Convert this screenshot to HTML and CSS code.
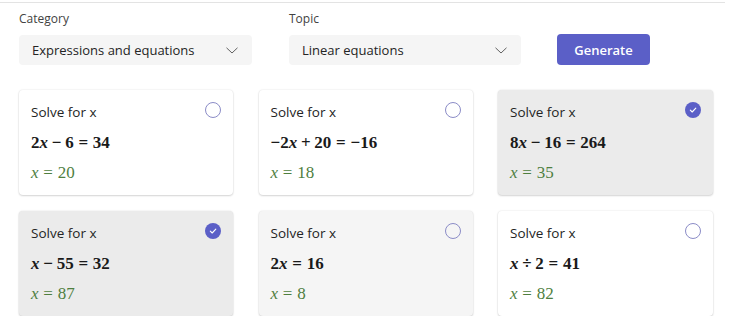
FILE: index.html
```html
<!DOCTYPE html>
<html>
<head>
<meta charset="utf-8">
<link rel="stylesheet" href="styles.css">
</head>
<body>
<div class="panel">
  <div class="controls">
    <div class="field field-cat">
      <div class="label">Category</div>
      <div class="select"><span>Expressions and equations</span>
        <svg class="chev" width="12" height="7" viewBox="0 0 12 7"><path d="M0.5 0.8 L6 6 L11.5 0.8" fill="none" stroke="#616161" stroke-width="1"/></svg>
      </div>
    </div>
    <div class="field field-topic">
      <div class="label">Topic</div>
      <div class="select"><span>Linear equations</span>
        <svg class="chev" width="12" height="7" viewBox="0 0 12 7"><path d="M0.5 0.8 L6 6 L11.5 0.8" fill="none" stroke="#616161" stroke-width="1"/></svg>
      </div>
    </div>
    <button class="generate">Generate</button>
  </div>
  <div class="grid">
    <div class="card">
      <div class="head"><span>Solve for x</span><span class="radio"></span></div>
      <div class="eq">2<i>x</i><span class="op">−</span>6<span class="rel">=</span>34</div>
      <div class="ans"><i>x</i><span class="rel">=</span>20</div>
    </div>
    <div class="card">
      <div class="head"><span>Solve for x</span><span class="radio"></span></div>
      <div class="eq">−2<i>x</i><span class="op">+</span>20<span class="rel">=</span>−16</div>
      <div class="ans"><i>x</i><span class="rel">=</span>18</div>
    </div>
    <div class="card selected">
      <div class="head"><span>Solve for x</span><span class="radio checked"><svg width="16" height="16" viewBox="0 0 16 16"><path d="M5.3 8.2 L7.2 10 L10.8 6.2" fill="none" stroke="#fff" stroke-width="1.1" stroke-linecap="round" stroke-linejoin="round"/></svg></span></div>
      <div class="eq">8<i>x</i><span class="op">−</span>16<span class="rel">=</span>264</div>
      <div class="ans"><i>x</i><span class="rel">=</span>35</div>
    </div>
    <div class="card selected">
      <div class="head"><span>Solve for x</span><span class="radio checked"><svg width="16" height="16" viewBox="0 0 16 16"><path d="M5.3 8.2 L7.2 10 L10.8 6.2" fill="none" stroke="#fff" stroke-width="1.1" stroke-linecap="round" stroke-linejoin="round"/></svg></span></div>
      <div class="eq"><i>x</i><span class="op">−</span>55<span class="rel">=</span>32</div>
      <div class="ans"><i>x</i><span class="rel">=</span>87</div>
    </div>
    <div class="card hover">
      <div class="head"><span>Solve for x</span><span class="radio"></span></div>
      <div class="eq">2<i>x</i><span class="rel">=</span>16</div>
      <div class="ans"><i>x</i><span class="rel">=</span>8</div>
    </div>
    <div class="card">
      <div class="head"><span>Solve for x</span><span class="radio"></span></div>
      <div class="eq"><i>x</i><span class="op">÷</span>2<span class="rel">=</span>41</div>
      <div class="ans"><i>x</i><span class="rel">=</span>82</div>
    </div>
  </div>
</div>
</body>
</html>
```
FILE: styles.css
```css
html, body {
  margin: 0;
  padding: 0;
  background: #ffffff;
}
body {
  font-family: "Open Sans", "Noto Sans", sans-serif;
  color: #242424;
}
.panel {
  margin-top: 2px;
  border-top: 1px solid #e3e3e3;
  padding: 0 0 0 19px;
  width: 706px;
}
.controls {
  display: flex;
  align-items: flex-end;
  padding-top: 7px;
}
.field {
  display: flex;
  flex-direction: column;
}
.field-cat { width: 233px; margin-right: 37px; }
.field-topic { width: 232px; margin-right: 36px; }
.label {
  font-size: 12px;
  line-height: 17px;
  color: #424242;
  margin-bottom: 8px;
}
.select {
  height: 30px;
  background: #f5f5f5;
  border-radius: 4px;
  display: flex;
  align-items: center;
  justify-content: space-between;
  padding: 0 14px 0 13px;
  font-size: 13px;
  color: #242424;
}
.chev { display: block; margin-top: 1px; }
.generate {
  width: 93px;
  height: 31px;
  border: none;
  border-radius: 4px;
  background: #5b5fc7;
  color: #ffffff;
  font-family: "Open Sans", "Noto Sans", sans-serif;
  font-weight: 600;
  font-size: 13px;
  padding: 0;
}
.grid {
  display: grid;
  grid-template-columns: 214px 214px 215px;
  column-gap: 25.5px;
  row-gap: 16px;
  margin-top: 25px;
}
.card {
  height: 105px;
  box-sizing: border-box;
  background: #ffffff;
  border-radius: 4px;
  box-shadow: 0 0 2px rgba(0,0,0,0.12), 0 1px 2px rgba(0,0,0,0.14);
  padding: 12px 12px 0 12px;
}
.card.selected { background: #ebebeb; }
.card.hover { background: #f5f5f5; }
.head {
  display: flex;
  justify-content: space-between;
  align-items: center;
  font-size: 13.5px;
  line-height: 20px;
  color: #242424;
}
.radio {
  width: 16px;
  height: 16px;
  box-sizing: border-box;
  border: 1.5px solid #8b8cc7;
  border-radius: 50%;
  margin-right: 0;
  margin-top: -4px;
  display: flex;
  align-items: center;
  justify-content: center;
}
.radio.checked {
  border: none;
  background: #5b5fc7;
}
.radio svg { display: block; }
.eq {
  margin-top: 11px;
  font-family: "Liberation Serif", "DejaVu Serif", serif;
  font-weight: bold;
  font-size: 17px;
  line-height: 20px;
  color: #1a1a1a;
}
.ans {
  margin-top: 10px;
  font-family: "Liberation Serif", "DejaVu Serif", serif;
  font-size: 17px;
  line-height: 20px;
  color: #4f7f3f;
}
.eq i, .ans i { font-style: italic; }
.op { margin: 0 0.22em; }
.rel { margin: 0 0.28em; }
```
